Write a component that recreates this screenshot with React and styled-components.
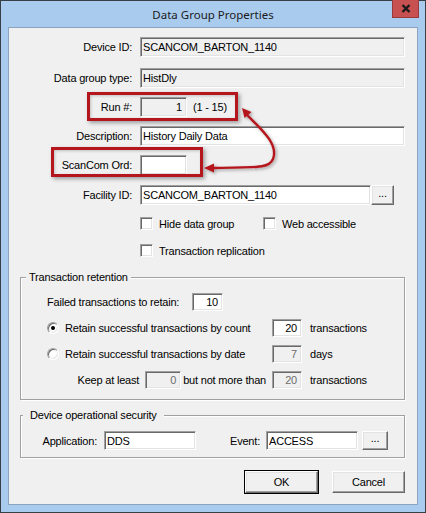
import React from 'react';
import styled, { createGlobalStyle } from 'styled-components';

const GlobalStyle = createGlobalStyle`
  html, body {
    margin: 0;
    padding: 0;
    background: #a9cbee;
  }
  body {
    font-family: "Liberation Sans", Arial, sans-serif;
    font-size: 11px;
    letter-spacing: -0.2px;
    color: #000;
  }
  * { box-sizing: border-box; }
`;

const Window = styled.div`
  width: 426px;
  height: 513px;
  border: 1px solid #3a3f45;
  background: #a9cbee;
  padding: 0 7px 7px;
  display: flex;
  flex-direction: column;
`;

const TitleBar = styled.div`
  height: 26px;
  display: grid;
  grid-template-columns: 1fr auto 1fr;
  align-items: center;
`;

const Title = styled.div`
  grid-column: 2;
  font-family: "Noto Sans", "Open Sans", sans-serif;
  font-size: 11.5px;
  letter-spacing: 0;
  color: #1b1b1b;
  padding-top: 1px;
`;

const CloseButton = styled.div`
  grid-column: 3;
  justify-self: end;
  align-self: start;
  margin-top: -1px;
  margin-right: -1px;
  width: 27px;
  height: 18px;
  background: #c75050;
  border: 1px solid #9a3a3a;
  border-top: none;
  display: flex;
  align-items: center;
  justify-content: center;
`;

const Client = styled.div`
  position: relative;
  flex: 1;
  background: #f0f0f0;
  border: 1px solid #8aa4c2;
  padding: 9px 12px 0 11px;
  display: flex;
  flex-direction: column;
`;

const FieldList = styled.div`
  display: flex;
  flex-direction: column;
  gap: 9px;
`;

const FieldRow = styled.div`
  display: grid;
  grid-template-columns: 112px 1fr;
  column-gap: 8px;
  align-items: center;
  margin-top: ${p => p.$mt || 0}px;
`;

const Label = styled.div`
  text-align: right;
  white-space: nowrap;
`;

const Inline = styled.div`
  display: flex;
  align-items: center;
  gap: ${p => p.$gap || 0}px;
`;

const TextBox = styled.div`
  width: ${p => (p.$w ? `${p.$w}px` : '100%')};
  height: ${p => p.$h || 20}px;
  flex: none;
  background: ${p => (p.$white ? '#fff' : '#f0f0f0')};
  color: ${p => (p.$dim ? '#6d6d6d' : '#000')};
  border: 1px solid;
  border-color: #a0a0a0 #fff #fff #a0a0a0;
  box-shadow: inset 1px 1px 0 #696969, inset -1px -1px 0 #e3e3e3;
  padding: 0 ${p => (p.$right ? 4 : 2)}px 0 2px;
  display: flex;
  align-items: center;
  justify-content: ${p => (p.$right ? 'flex-end' : 'flex-start')};
  white-space: nowrap;
  overflow: hidden;
`;

const Button = styled.div`
  width: ${p => p.$w}px;
  height: ${p => p.$h}px;
  flex: none;
  background: #f0f0f0;
  border: 1px solid;
  border-color: #fff #696969 #696969 #fff;
  box-shadow: inset -1px -1px 0 #a0a0a0, inset 1px 1px 0 #e3e3e3;
  outline: ${p => (p.$default ? '1px solid #000' : 'none')};
  outline-offset: 0;
  display: flex;
  align-items: center;
  justify-content: center;
  line-height: 1;
  padding-bottom: ${p => (p.$dots ? 4 : 0)}px;
`;

const CheckRow = styled.div`
  display: flex;
  align-items: center;
  margin-left: 120px;
  margin-top: ${p => p.$mt || 0}px;
  height: 13px;
`;

const CheckItem = styled.label`
  display: flex;
  align-items: center;
  gap: 6px;
  width: ${p => (p.$w ? `${p.$w}px` : 'auto')};
`;

const CheckBox = styled.span`
  width: 13px;
  height: 13px;
  flex: none;
  background: #fff;
  border: 1px solid;
  border-color: #a0a0a0 #fff #fff #a0a0a0;
  box-shadow: inset 1px 1px 0 #696969, inset -1px -1px 0 #e3e3e3;
`;

const Radio = styled.span`
  width: 12px;
  height: 12px;
  flex: none;
  border-radius: 50%;
  background: #fff;
  border: 1px solid;
  border-color: #a0a0a0 #fff #fff #a0a0a0;
  box-shadow: inset 1px 1px 0 #696969, inset -1px -1px 0 #e3e3e3;
  display: flex;
  align-items: center;
  justify-content: center;
  &::after {
    content: "";
    width: 4px;
    height: 4px;
    border-radius: 50%;
    background: ${p => (p.$on ? '#000' : 'transparent')};
  }
`;

const Group = styled.div`
  position: relative;
  margin-top: ${p => p.$mt}px;
  border: 1px solid #a0a0a0;
  box-shadow: inset 1px 1px 0 #fff, 1px 1px 0 #fff;
  padding: ${p => p.$pad};
  display: flex;
  flex-direction: column;
  gap: 8px;
`;

const GroupTitle = styled.div`
  position: absolute;
  top: -7px;
  left: ${p => p.$left}px;
  padding: 0 ${p => p.$pad}px;
  line-height: 13px;
  background: #f0f0f0;
  white-space: nowrap;
`;

const RetainRow = styled.div`
  display: grid;
  grid-template-columns: 217px 30px auto;
  column-gap: 8px;
  align-items: center;
  height: 18px;
`;

const SecurityRow = styled.div`
  display: grid;
  grid-template-columns: 83px 92px 70px 92px 30px;
  align-items: center;
  height: 19px;
`;

const CellLabel = styled.div`
  text-align: right;
  padding-right: ${p => p.$pr}px;
  white-space: nowrap;
`;

const Actions = styled.div`
  display: flex;
  justify-content: flex-end;
  gap: 14px;
  margin-top: 13px;
`;

const Callout = styled.div`
  position: absolute;
  left: ${p => p.$x}px;
  top: ${p => p.$y}px;
  width: ${p => p.$w}px;
  height: ${p => p.$h}px;
  border: 3px solid #b5161d;
  box-shadow: 2px 2px 4px rgba(0, 0, 0, 0.35), inset 1px 1px 3px rgba(0, 0, 0, 0.2);
  pointer-events: none;
`;

const ArrowLayer = styled.svg`
  position: absolute;
  left: 191px;
  top: 72px;
  overflow: visible;
  pointer-events: none;
`;

const CloseIcon = () => (
  <svg width="10" height="9" viewBox="0 0 10 9">
    <path d="M1.5 1 L8.5 8 M8.5 1 L1.5 8" stroke="#1a1a1a" strokeWidth="2.4" />
  </svg>
);

const Arrow = () => (
  <ArrowLayer width="90" height="80" viewBox="0 0 90 80">
    <defs>
      <filter id="sh" x="-20%" y="-20%" width="140%" height="140%">
        <feDropShadow dx="1.5" dy="1.5" stdDeviation="1.5" floodColor="#000" floodOpacity="0.35" />
      </filter>
    </defs>
    <g filter="url(#sh)">
      <path d="M47 15 C60 28, 79 44, 73 59 C69 69, 55 67, 13 68" fill="none" stroke="#b5161d" strokeWidth="2.4" />
      <polygon points="42,8 51.5,12 44.5,18" fill="#b5161d" />
      <polygon points="4,68 14,63.5 14,72.5" fill="#b5161d" />
    </g>
  </ArrowLayer>
);

export default function App() {
  return (
    <>
      <GlobalStyle />
      <Window>
        <TitleBar>
          <Title>Data Group Properties</Title>
          <CloseButton><CloseIcon /></CloseButton>
        </TitleBar>
        <Client>
          <FieldList>
            <FieldRow>
              <Label>Device ID:</Label>
              <TextBox>SCANCOM_BARTON_1140</TextBox>
            </FieldRow>
            <FieldRow $mt={2}>
              <Label>Data group type:</Label>
              <TextBox>HistDly</TextBox>
            </FieldRow>
            <FieldRow>
              <Label>Run #:</Label>
              <Inline $gap={6}>
                <TextBox $w={47} $right>1</TextBox>
                <span>(1 - 15)</span>
              </Inline>
            </FieldRow>
            <FieldRow>
              <Label>Description:</Label>
              <TextBox $white>History Daily Data</TextBox>
            </FieldRow>
            <FieldRow>
              <Label>ScanCom Ord:</Label>
              <TextBox $w={47} $white />
            </FieldRow>
            <FieldRow $mt={1}>
              <Label>Facility ID:</Label>
              <Inline>
                <TextBox $w={231} $white>SCANCOM_BARTON_1140</TextBox>
                <Button $w={23} $h={20} $dots>...</Button>
              </Inline>
            </FieldRow>
            <CheckRow $mt={3}>
              <CheckItem $w={123}><CheckBox />Hide data group</CheckItem>
              <CheckItem><CheckBox />Web accessible</CheckItem>
            </CheckRow>
            <CheckRow $mt={5}>
              <CheckItem><CheckBox />Transaction replication</CheckItem>
            </CheckRow>
          </FieldList>

          <Group $mt={20} $pad="15px 0 10px 26px">
            <GroupTitle $left={5} $pad={3}>Transaction retention</GroupTitle>
            <Inline>
              <span style={{ width: 145 }}>Failed transactions to retain:</span>
              <TextBox $w={31} $h={18} $white $right>10</TextBox>
            </Inline>
            <RetainRow>
              <Inline $gap={6}><Radio $on />Retain successful transactions by count</Inline>
              <TextBox $w={30} $h={18} $white $right>20</TextBox>
              <span>transactions</span>
            </RetainRow>
            <RetainRow>
              <Inline $gap={6}><Radio />Retain successful transactions by date</Inline>
              <TextBox $w={30} $h={18} $dim $right>7</TextBox>
              <span>days</span>
            </RetainRow>
            <RetainRow>
              <Inline style={{ justifyContent: 'flex-end', marginRight: -2 }}>
                <span>Keep at least</span>
                <TextBox $w={36} $h={18} $dim $right style={{ margin: '0 2px 0 6px' }}>0</TextBox>
                <span>but not more than</span>
              </Inline>
              <TextBox $w={30} $h={18} $dim $right>20</TextBox>
              <span>transactions</span>
            </RetainRow>
          </Group>

          <Group $mt={15} $pad="15px 0 7px 0">
            <GroupTitle $left={2} $pad={7}>Device operational security</GroupTitle>
            <SecurityRow>
              <CellLabel $pr={7}>Application:</CellLabel>
              <TextBox $w={92} $h={19} $white>DDS</TextBox>
              <CellLabel $pr={6}>Event:</CellLabel>
              <TextBox $w={92} $h={19} $white>ACCESS</TextBox>
              <Button $w={26} $h={19} $dots style={{ justifySelf: 'end' }}>...</Button>
            </SecurityRow>
          </Group>

          <Actions>
            <Button $w={73} $h={22} $default>OK</Button>
            <Button $w={73} $h={22}>Cancel</Button>
          </Actions>

          <Callout $x={78} $y={64} $w={151} $h={29} />
          <Callout $x={42} $y={119} $w={152} $h={30} />
          <Arrow />
        </Client>
      </Window>
    </>
  );
}
